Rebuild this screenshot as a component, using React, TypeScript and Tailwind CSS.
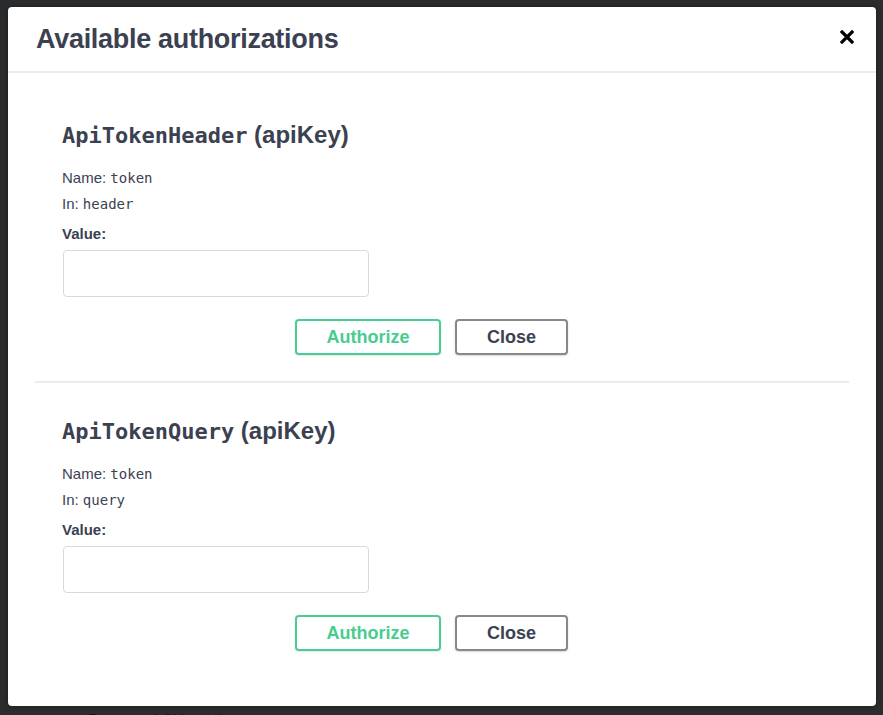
import React from "react"

type Scheme = {
    title: string
    name: string
    location: string
}

const schemes: Scheme[] = [
    { title: "ApiTokenHeader", name: "token", location: "header" },
    { title: "ApiTokenQuery", name: "token", location: "query" },
]

function CloseIcon() {
    return (
        <svg width="14" height="14" viewBox="0 0 14 14" className="block">
            <path d="M2 2 L12 12 M12 2 L2 12" stroke="#000" strokeWidth={3.2} strokeLinecap="square" />
        </svg>
    )
}

function AuthSection({ scheme }: { scheme: Scheme }) {
    return (
        <div className="pl-[27px] pr-[27px] pt-[33px]">
            <h4 className="text-[24px] leading-[30px] font-bold text-[#3b4151]">
                <code className="font-['DejaVu_Sans_Mono',monospace] text-[22px] font-bold">{scheme.title}</code>
                {" (apiKey)"}
            </h4>
            <div className="mt-[14px] text-[15px] leading-[25px] text-[#3b4151]">
                <p>
                    Name: <code className="font-['DejaVu_Sans_Mono',monospace] text-[14px]">{scheme.name}</code>
                </p>
                <p>
                    In: <code className="font-['DejaVu_Sans_Mono',monospace] text-[14px]">{scheme.location}</code>
                </p>
            </div>
            <label className="mt-[7px] block text-[15px] leading-[20px] font-bold text-[#3b4151]">Value:</label>
            <input
                type="text"
                className="mt-[6px] ml-px block h-[47px] w-[306px] rounded-[4px] border border-[#d9d9d9] bg-white px-2 outline-none"
            />
            <div className="mt-[22px] flex justify-center gap-[14px] pr-[21px]">
                <button className="h-[36px] w-[146px] rounded-[4px] border-2 border-[#49cc90] bg-white text-[18px] font-bold text-[#49cc90] shadow-[0_1px_2px_rgba(0,0,0,0.1)]">
                    Authorize
                </button>
                <button className="h-[36px] w-[113px] rounded-[4px] border-2 border-[#888] bg-white text-[18px] font-bold text-[#3b4151] shadow-[0_1px_2px_rgba(0,0,0,0.15)]">
                    Close
                </button>
            </div>
        </div>
    )
}

export default function App() {
    return (
        <div className="h-[715px] w-[883px] overflow-hidden bg-[#2b2c2e] pt-[7px] pl-[8px] font-['Liberation_Sans',Arial,sans-serif]">
            <div className="h-[699px] w-[868px] rounded-[4px] bg-white shadow-[0_0_4px_rgba(0,0,0,0.4)]">
                <div className="flex h-[66px] items-center justify-between border-b-2 border-[#ebebeb] pl-[28px] pr-[22px]">
                    <h3 className="text-[27px] font-bold tracking-[-0.3px] text-[#3b4151]">Available authorizations</h3>
                    <button className="-mt-[4px]">
                        <CloseIcon />
                    </button>
                </div>
                <div className="px-[27px] pt-[14px]">
                    <AuthSection scheme={schemes[0]} />
                    <div className="mt-[26px] h-[2px] bg-[#ebebeb]" />
                    <AuthSection scheme={schemes[1]} />
                </div>
            </div>
            <p className="ml-[80px] mt-[3px] text-[16px] text-[#141414]">Password (if basic)</p>
        </div>
    )
}
